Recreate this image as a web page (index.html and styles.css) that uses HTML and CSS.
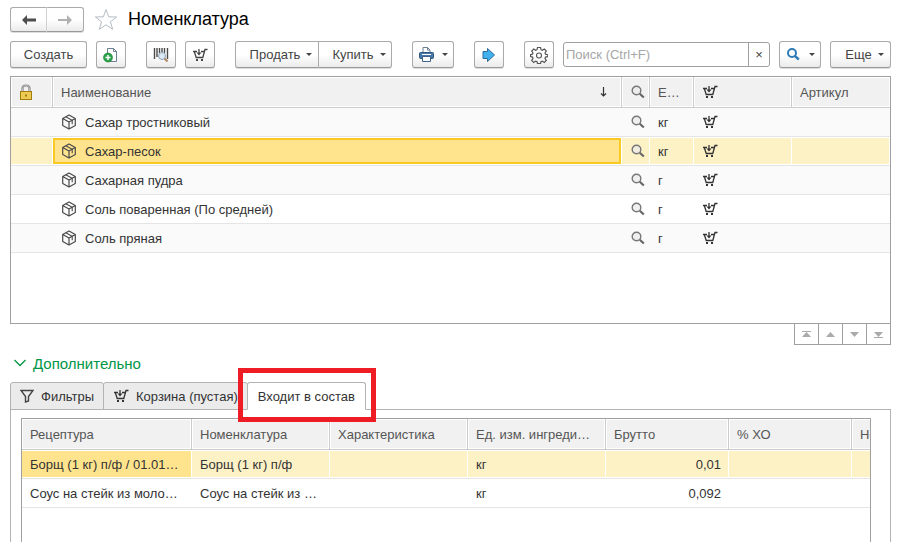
FILE: index.html
```html
<!DOCTYPE html>
<html lang="ru">
<head>
  <meta charset="UTF-8">
  <title>Номенклатура</title>
  <link rel="stylesheet" href="styles.css">
</head>
<body>
  <svg class="sprite" width="0" height="0" aria-hidden="true">
    <symbol id="cart" viewBox="0 0 16 16">
      <path d="M1 4.500h4M9 4.500h3M2.300 4.500l1.900 6h6.600L13 2.500h2.500" fill="none" stroke="currentColor" stroke-width="1.300"/>
      <path d="M7 2v4" stroke="currentColor" stroke-width="1.300"/>
      <path d="M4.500 5.500h5L7 8.500zM4 12h2v2H4zM9 12h2v2H9z" fill="currentColor"/>
    </symbol>
    <symbol id="lens" viewBox="0 0 16 16">
      <circle cx="6.500" cy="6.500" r="4.300" fill="#e9e9e9" fill-opacity=".7" stroke="#777" stroke-width="1.400"/>
      <path d="M9.800 9.800l4 3.700" stroke="#666" stroke-width="2.200"/>
    </symbol>
    <symbol id="box" viewBox="0 0 16 16">
      <path d="M8 1l6.300 3.500v7L8 15l-6.300-3.500v-7zM1.700 4.500L8 8l6.300-3.500M8 8v7" fill="none" stroke="#4a4a4a" stroke-width="1.200" stroke-linejoin="round"/>
      <path d="M4.800 2.800l6.400 3.500v4" fill="none" stroke="#4a4a4a" stroke-width="1.100"/>
    </symbol>
  </svg>

  <header class="title-bar">
    <div class="nav-buttons">
      <button class="btn" aria-label="Назад"><svg width="14" height="10" viewBox="0 0 14 10"><path d="M0 5l5-5v3.500h9v3H5V10z" fill="#4d4d4d"/></svg></button>
      <button class="btn" aria-label="Вперед"><svg width="14" height="10" viewBox="0 0 14 10"><path d="M14 5L9 0v4H0v2h9v4z" fill="#b0b0b0"/></svg></button>
    </div>
    <svg class="star" width="24" height="23" viewBox="0 0 24 23"><path d="M12 1.500l2.700 7.300 8 .2-6.300 4.800 2.300 7.500L12 16.800l-6.700 4.500 2.300-7.500L1.300 9l8-.2z" fill="#fff" stroke="#b5bcc4"/></svg>
    <h1>Номенклатура</h1>
  </header>

  <div class="toolbar">
    <button class="btn create">Создать</button>
    <button class="btn icon" aria-label="Создать группу">
      <svg width="16" height="16" viewBox="0 0 16 16"><path d="M4.500 1.500h6l3 3v10h-9z" fill="#fff" stroke="#6b7f95"/><path d="M10.500 1.500v3h3" fill="none" stroke="#6b7f95"/><circle cx="5" cy="10.500" r="4.500" fill="#2ca04a" stroke="#14812f" stroke-width=".6"/><path d="M5 8v5M2.500 10.500h5" stroke="#fff" stroke-width="1.500"/></svg>
    </button>
    <button class="btn icon apart" aria-label="Поиск по штрихкоду">
      <svg width="16" height="16" viewBox="0 0 16 16"><path d="M1.500 1v11M4 1v9M6.500 1v5M9 1v4M11.500 1v5M14.500 1v11" stroke="#4a4a4a" stroke-width="1.400"/><circle cx="9" cy="9" r="3.500" fill="#dce9f5" stroke="#8ea3b8"/><path d="M11.500 11.500l3 3" stroke="#b08460" stroke-width="2"/></svg>
    </button>
    <button class="btn icon" aria-label="В корзину"><svg width="16" height="16"><use href="#cart"/></svg></button>
    <div class="btn-group apart">
      <button class="btn sell">Продать<span class="caret"></span></button>
      <button class="btn buy">Купить<span class="caret"></span></button>
    </div>
    <button class="btn drop apart" aria-label="Печать">
      <svg width="15" height="15" viewBox="0 0 15 15"><path d="M4 6V.5h4.500L11 3v3" fill="#fff" stroke="#6b7f95"/><path d="M8.500.5V3H11" fill="none" stroke="#6b7f95"/><rect x=".5" y="5.500" width="14" height="6" rx="1" fill="#4679a8" stroke="#2d587f"/><path d="M3 7.500h9" stroke="#fff"/><path d="M3.500 9.500h8v5h-8z" fill="#fff" stroke="#3d658b"/></svg>
      <span class="caret"></span>
    </button>
    <button class="btn icon apart" aria-label="Перейти">
      <svg width="14" height="16" viewBox="0 0 14 16"><path d="M1 4.500h4.500v-3L12.500 8l-7 6.500v-3H1z" fill="#3fb0ec" stroke="#2b6c9c"/></svg>
    </button>
    <button class="btn icon apart" aria-label="Настройка">
      <svg width="18" height="18" viewBox="0 0 18 18"><path d="M7.500 1.500h3l.5 2.200 1.300.6 2-1.300 2 2-1.300 2 .5 1.200 2.200.5v1.900l-2.200.5-.5 1.300 1.300 2-2 2-2-1.300-1.300.5-.5 1.900h-3L7 15.600l-1.300-.5-2 1.300-2-2L3 12.400l-.5-1.300-1.900-.5V8.700l1.900-.5L3 7 1.700 5l2-2 2 1.300L7 3.700z" fill="none" stroke="#555" stroke-width="1.200"/><circle cx="9" cy="9.500" r="2.500" fill="none" stroke="#555" stroke-width="1.100"/></svg>
    </button>
    <div class="search">
      <input type="text" placeholder="Поиск (Ctrl+F)" aria-label="Поиск">
      <button aria-label="Очистить">×</button>
    </div>
    <button class="btn drop" aria-label="Найти">
      <svg width="15" height="15" viewBox="0 0 15 15"><circle cx="6" cy="6" r="4" fill="none" stroke="#2e7cb5" stroke-width="2"/><path d="M8.800 8.800l4 3.700" stroke="#2e7cb5" stroke-width="2.500"/></svg>
      <span class="caret"></span>
    </button>
    <button class="btn more">Еще<span class="caret"></span></button>
  </div>

  <div class="list">
    <table>
      <colgroup><col class="c-lock"><col><col class="c-lens"><col class="c-unit"><col class="c-cart"><col class="c-art"></colgroup>
      <thead>
        <tr>
          <th><svg width="14" height="17" viewBox="0 0 14 17"><path d="M3.500 8V4.500q0-3 3.500-3t3.500 3V8" fill="none" stroke="#858585" stroke-width="2.200"/><path d="M3.500 8V4.500q0-3 3.500-3t3.500 3V8" fill="none" stroke="#e5e5e5" stroke-width=".6"/><rect x="1.500" y="7.500" width="11" height="8" fill="#eccb52" stroke="#a57c12"/><path d="M6 10.500h2v2H6z" fill="#a57c12"/></svg></th>
          <th><div class="sorted">Наименование<svg width="7" height="10" viewBox="0 0 7 10"><path d="M3.500 0v9M1 6.500l2.500 2.500L6 6.500" fill="none" stroke="#333" stroke-width="1.200"/></svg></div></th>
          <th><svg width="16" height="16"><use href="#lens"/></svg></th>
          <th>Е…</th>
          <th><svg class="dark" width="16" height="16"><use href="#cart"/></svg></th>
          <th>Артикул</th>
        </tr>
      </thead>
      <tbody>
        <tr>
          <td></td>
          <td><div class="name"><svg width="16" height="16"><use href="#box"/></svg>Сахар тростниковый</div></td>
          <td><svg width="16" height="16"><use href="#lens"/></svg></td>
          <td>кг</td>
          <td><svg width="16" height="16"><use href="#cart"/></svg></td>
          <td></td>
        </tr>
        <tr class="selected">
          <td></td>
          <td class="current framed"><div class="name"><svg width="16" height="16"><use href="#box"/></svg>Сахар-песок</div></td>
          <td><svg width="16" height="16"><use href="#lens"/></svg></td>
          <td>кг</td>
          <td><svg width="16" height="16"><use href="#cart"/></svg></td>
          <td></td>
        </tr>
        <tr>
          <td></td>
          <td><div class="name"><svg width="16" height="16"><use href="#box"/></svg>Сахарная пудра</div></td>
          <td><svg width="16" height="16"><use href="#lens"/></svg></td>
          <td>г</td>
          <td><svg width="16" height="16"><use href="#cart"/></svg></td>
          <td></td>
        </tr>
        <tr>
          <td></td>
          <td><div class="name"><svg width="16" height="16"><use href="#box"/></svg>Соль поваренная (По средней)</div></td>
          <td><svg width="16" height="16"><use href="#lens"/></svg></td>
          <td>г</td>
          <td><svg width="16" height="16"><use href="#cart"/></svg></td>
          <td></td>
        </tr>
        <tr>
          <td></td>
          <td><div class="name"><svg width="16" height="16"><use href="#box"/></svg>Соль пряная</div></td>
          <td><svg width="16" height="16"><use href="#lens"/></svg></td>
          <td>г</td>
          <td><svg width="16" height="16"><use href="#cart"/></svg></td>
          <td></td>
        </tr>
      </tbody>
    </table>
  </div>
  <div class="pager">
    <button aria-label="В начало"><svg width="9" height="7" viewBox="0 0 9 7"><path d="M0 0h9v1H0zM4.500 1L9 6H0z"/></svg></button>
    <button aria-label="Вверх"><svg width="9" height="7" viewBox="0 0 9 7"><path d="M4.500 1L9 6H0z"/></svg></button>
    <button aria-label="Вниз"><svg width="9" height="7" viewBox="0 0 9 7"><path d="M0 1h9L4.500 6z"/></svg></button>
    <button aria-label="В конец"><svg width="9" height="7" viewBox="0 0 9 7"><path d="M0 1h9L4.500 6zM0 6h9v1H0z"/></svg></button>
  </div>

  <button class="section-toggle">
    <svg width="12" height="8" viewBox="0 0 12 8"><path d="M.5 1L6 6.500 11.500 1" fill="none" stroke="#009646" stroke-width="1.300"/></svg>
    Дополнительно
  </button>

  <div class="tabs">
    <button class="tab">
      <svg width="14" height="14" viewBox="0 0 14 14"><path d="M1 1.500h12L8.500 7.500V12l-3 1V7.500z" fill="none" stroke="#444" stroke-width="1.400"/></svg>
      Фильтры
    </button>
    <button class="tab">
      <svg width="16" height="16"><use href="#cart"/></svg>
      Корзина (пустая)
    </button>
    <button class="tab active">Входит в состав<span class="highlight"></span></button>
  </div>
  <div class="panel">
    <div class="list recipes">
      <table>
        <colgroup><col class="c-recipe"><col class="c-mid"><col class="c-mid"><col class="c-mid"><col class="c-num"><col class="c-num"><col class="c-mid"></colgroup>
        <thead>
          <tr>
            <th>Рецептура</th>
            <th>Номенклатура</th>
            <th>Характеристика</th>
            <th>Ед. изм. ингреди…</th>
            <th>Брутто</th>
            <th>% ХО</th>
            <th>Но</th>
          </tr>
        </thead>
        <tbody>
          <tr class="selected">
            <td class="current">Борщ (1 кг) п/ф / 01.01…</td>
            <td>Борщ (1 кг) п/ф</td>
            <td></td>
            <td>кг</td>
            <td class="num">0,01</td>
            <td></td>
            <td></td>
          </tr>
          <tr>
            <td>Соус на стейк из моло…</td>
            <td>Соус на стейк из …</td>
            <td></td>
            <td>кг</td>
            <td class="num">0,092</td>
            <td></td>
            <td></td>
          </tr>
        </tbody>
      </table>
    </div>
  </div>
</body>
</html>
```

FILE: styles.css
```css
* {
  box-sizing: border-box;
}

body {
  margin: 0;
  padding: 7px 6px 0 10px;
  height: 100vh;
  overflow: hidden;
  display: flex;
  flex-direction: column;
  background: #fff;
  color: #333;
  font-family: "Liberation Sans", Arial, sans-serif;
  font-size: 13px;
}

button, input {
  font-family: inherit;
  font-size: 13px;
  color: #444;
}

svg {
  display: block;
  flex: none;
}

.sprite {
  position: absolute;
}

.dark {
  color: #333;
}

/* title */
.title-bar {
  display: flex;
  align-items: center;
  height: 25px;
}

h1 {
  margin: 0;
  color: #000;
  font-size: 18px;
  font-weight: normal;
}

.star {
  margin: 0 10px;
}

.btn {
  display: flex;
  align-items: center;
  justify-content: center;
  height: 27px;
  padding: 0;
  border: 1px solid #aaa;
  border-bottom-color: #999;
  border-radius: 3px;
  background: linear-gradient(#fff 50%, #ebebeb);
  box-shadow: 0 1px 0 #ddd;
}

.nav-buttons, .btn-group {
  display: flex;
}

.nav-buttons .btn {
  width: 37px;
  height: 25px;
}

.nav-buttons .btn:first-child,
.btn-group .btn:first-child {
  border-radius: 3px 0 0 3px;
}

.nav-buttons .btn:last-child,
.btn-group .btn:last-child {
  border-left: 0;
  border-radius: 0 3px 3px 0;
}

.nav-buttons .btn:first-child {
  border-right-color: #d0d0d0;
}

/* toolbar */
.toolbar {
  display: flex;
  align-items: center;
  gap: 9px;
  margin: 9px 0 8px;
}

.apart {
  margin-left: 11px;
}

.create { width: 77px; }
.icon { width: 30px; }
.drop { width: 42px; gap: 8px; }
.sell { width: 84px; }
.buy { width: 73px; }
.more { width: 61px; }

.sell, .buy, .more {
  gap: 6px;
  padding-left: 8px;
}

.caret {
  border: 3px solid transparent;
  border-top-color: #444;
  border-bottom: 0;
}

.search {
  flex: 1;
  display: flex;
  min-width: 0;
  height: 25px;
  border: 1px solid #a0a0a0;
  border-radius: 3px;
}

.search input {
  flex: 1;
  min-width: 0;
  padding: 0 2px;
  border: 0;
  background: none;
}

.search input::placeholder {
  color: #a6a6a6;
}

.search button {
  width: 21px;
  padding: 0;
  border: 0;
  border-left: 1px solid #a0a0a0;
  background: none;
}

/* lists */
.list {
  min-height: 248px;
  border: 1px solid #a0a0a0;
  overflow: hidden;
}

table {
  width: 100%;
  table-layout: fixed;
  border-spacing: 0;
}

.c-lock { width: 42px; }
.c-lens { width: 28px; }
.c-unit { width: 44px; }
.c-cart { width: 98px; }
.c-art { width: 98px; }
.c-recipe { width: 170px; }
.c-mid { width: 138px; }
.c-num { width: 123px; }

th, td {
  padding: 0 8px;
  overflow: hidden;
  text-align: left;
  white-space: nowrap;
}

th {
  height: 31px;
  background: #f1f1f1;
  border-right: 1px solid #ccc;
  border-bottom: 1px solid #ccc;
  box-shadow: inset 0 0 0 1px #fff;
  color: #555;
  font-weight: normal;
}

th:last-child {
  border-right: 0;
}

td {
  height: 29px;
  border-bottom: 1px solid #e5e5e5;
}

tbody tr:nth-child(odd) {
  background: #fafafa;
}

.recipes tbody tr {
  background: #fff;
}

.selected td {
  background: #fdf1c6;
  box-shadow: inset -1px 0 #fff, inset 0 1px #fff, inset 0 -1px #fff;
}

.selected .current {
  background: #ffe48d;
}

.selected .framed {
  box-shadow: inset -1px 0 #fff, inset 0 1px #fff, inset 0 -1px #fff,
    inset 2px 0 #fac924, inset -3px 0 #fac924, inset 0 3px #fac924, inset 0 -3px #fac924;
}

.name {
  display: flex;
  align-items: center;
  gap: 8px;
}

.sorted {
  display: flex;
  align-items: center;
  justify-content: space-between;
  padding-right: 6px;
}

td.num {
  text-align: right;
}

.pager {
  align-self: flex-end;
  display: flex;
  margin-top: -1px;
  border: 1px solid #a0a0a0;
}

.pager button {
  display: flex;
  align-items: center;
  justify-content: center;
  width: 24px;
  height: 20px;
  padding: 0;
  border: 0;
  border-right: 1px solid #a0a0a0;
  background: #fff;
  fill: #aaa;
}

.pager button:last-child {
  width: 23px;
  border-right: 0;
}

/* bottom section */
.section-toggle {
  align-self: flex-start;
  display: flex;
  align-items: center;
  gap: 7px;
  height: 20px;
  margin: 8px 0 9px;
  padding: 0 4px;
  border: 0;
  background: none;
  color: #009646;
  font-size: 15px;
}

.tabs {
  display: flex;
}

.tab {
  display: flex;
  align-items: center;
  gap: 7px;
  height: 28px;
  margin: 0 -1px -1px 0;
  padding: 0 9px;
  border: 1px solid #b3b3b3;
  border-radius: 3px 3px 0 0;
  background: #ebebeb;
  color: #333;
}

.tab.active {
  position: relative;
  padding: 0 10px;
  border-bottom-color: #fff;
  background: #fff;
}

.highlight {
  position: absolute;
  inset: -15px -11px -13px -10px;
  border: 5px solid #ee1c24;
  pointer-events: none;
}

.panel {
  flex: 1;
  display: flex;
  padding: 8px 19px 0 10px;
  border: 1px solid #b3b3b3;
  border-bottom: 0;
}

.recipes {
  flex: 1;
  min-width: 0;
  min-height: 0;
  border-bottom: 0;
}

.recipes table {
  width: 968px;
}
```
